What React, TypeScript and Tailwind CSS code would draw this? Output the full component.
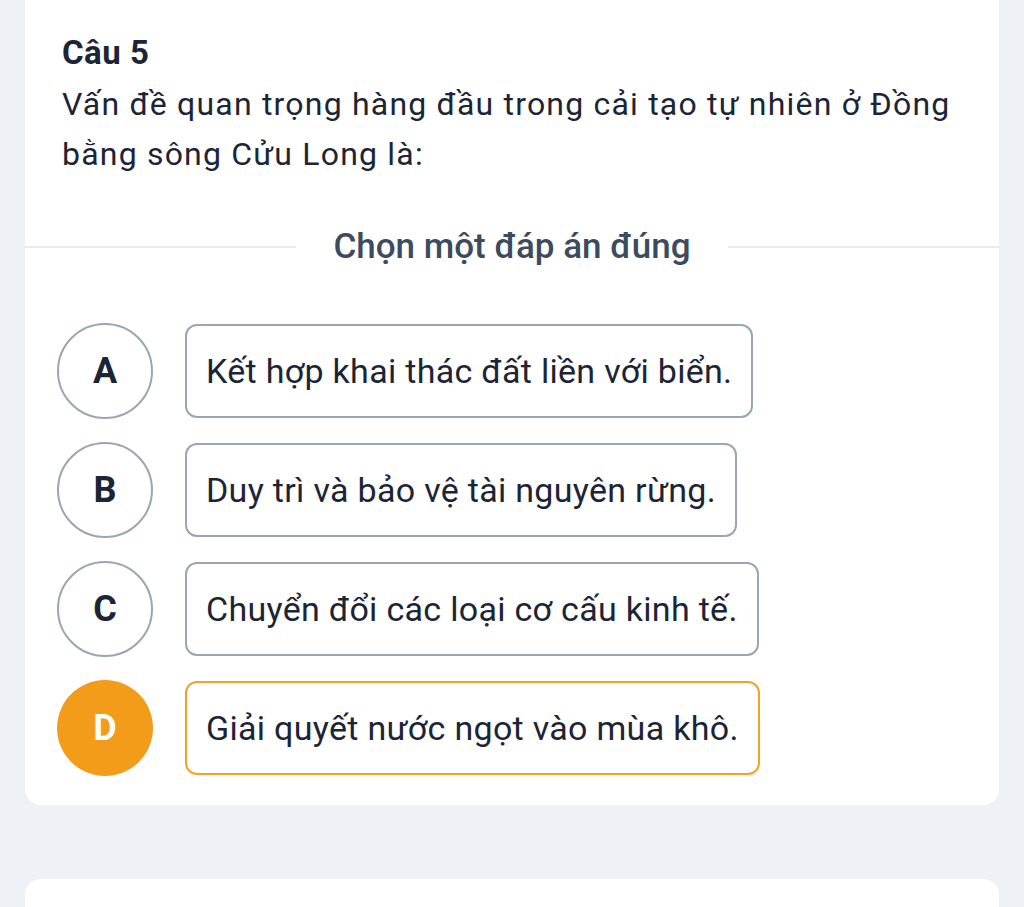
const options = [
  { key: "A", text: "Kết hợp khai thác đất liền với biển." },
  { key: "B", text: "Duy trì và bảo vệ tài nguyên rừng." },
  { key: "C", text: "Chuyển đổi các loại cơ cấu kinh tế." },
  { key: "D", text: "Giải quyết nước ngọt vào mùa khô." },
];

const selected = "D";

export default function App() {
  return (
    <div
      className="min-h-[907px] bg-[#eef1f5] overflow-hidden"
      style={{ fontFamily: "Roboto, 'Noto Sans', sans-serif" }}
    >
      <div className="mx-[25px] -mt-4 rounded-2xl bg-white pt-[45px] pb-[29px]">
        {/* Question */}
        <div className="px-[37px] text-[#1c2536]">
          <h2 className="text-[33px] font-bold leading-[48px] tracking-[0.5px]">Câu 5</h2>
          <p className="mt-0.5 text-[32px] leading-[50px] tracking-[1.2px]">
            Vấn đề quan trọng hàng đầu trong cải tạo tự nhiên ở Đồng bằng sông Cửu Long là:
          </p>
        </div>

        {/* Divider */}
        <div className="mt-[48px] flex items-center gap-[37px]">
          <div className="h-[2px] flex-1 bg-[#e8eaf0]" />
          <span className="text-[35px] font-medium leading-[40px] text-[#3d4b5f]">
            Chọn một đáp án đúng
          </span>
          <div className="h-[2px] flex-1 bg-[#e8eaf0]" />
        </div>

        {/* Options */}
        <div className="mt-[56px] flex flex-col gap-[23px] px-8">
          {options.map((o) => {
            const active = o.key === selected;
            return (
              <div key={o.key} className="flex items-center gap-8">
                <div
                  className={
                    active
                      ? "flex h-[96px] w-[96px] shrink-0 items-center justify-center rounded-full bg-[#f39c1a] text-[36px] font-bold text-white"
                      : "flex h-[96px] w-[96px] shrink-0 items-center justify-center rounded-full border-2 border-[#9ba5b3] text-[36px] font-bold text-[#1c2536]"
                  }
                >
                  {o.key}
                </div>
                <div
                  className={
                    active
                      ? "flex h-[94px] items-center rounded-xl border-2 border-[#f4a12a] px-[19px] text-[34px] tracking-[0.3px] text-[#1c2536]"
                      : "flex h-[94px] items-center rounded-xl border-2 border-[#9ba5b3] px-[19px] text-[34px] tracking-[0.3px] text-[#1c2536]"
                  }
                >
                  {o.text}
                </div>
              </div>
            );
          })}
        </div>
      </div>

      <div className="mx-[25px] mt-[74px] h-[200px] rounded-2xl bg-white" />
    </div>
  );
}
